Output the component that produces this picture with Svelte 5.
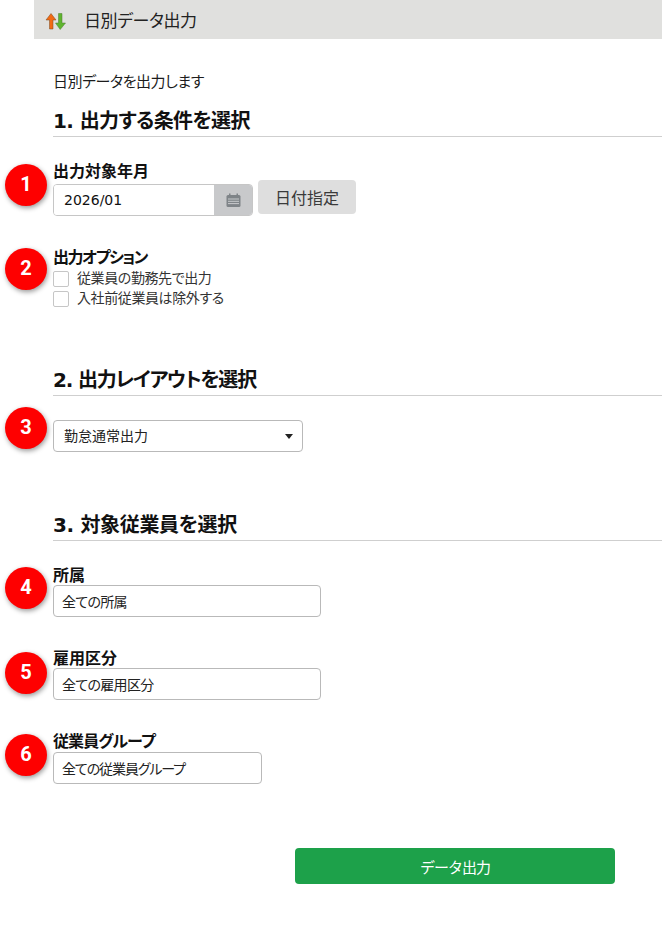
<script lang="ts">
  let month = $state('2026/01');
  let layout = $state('normal');
  let useWorkplace = $state(false);
  let excludeBeforeJoin = $state(false);

  const targets = [
    { no: 4, label: '所属', value: '全ての所属', size: 'wide' },
    { no: 5, label: '雇用区分', value: '全ての雇用区分', size: 'wide' },
    { no: 6, label: '従業員グループ', value: '全ての従業員グループ', size: 'narrow' }
  ];
</script>

<div class="page">
  <header class="head">
    <svg class="head-icon" width="22" height="20" viewBox="-1 -1.500 22 20" aria-hidden="true">
      <path d="M6 2 L11 8.500 H8 V17.500 H4.500 V8.500 H1 Z" fill="#f26a13" stroke="#7a4a20" stroke-width="0.5" />
      <path d="M13.500 2 H17 V11.500 H20.500 L15.200 18 L10.500 11.500 H13.500 Z" fill="#5fb52e" stroke="#4c7a30" stroke-width="0.5" />
    </svg>
    <h1>日別データ出力</h1>
  </header>

  <main class="content">
    <p class="intro">日別データを出力します</p>

    <h2 class="first">1. 出力する条件を選択</h2>

    <div class="field month-field">
      <span class="badge">1</span>
      <div class="label">出力対象年月</div>
      <div class="month-row">
        <div class="month-group">
          <input class="month-input" bind:value={month} />
          <span class="month-addon">
            <svg width="15" height="14" viewBox="0 0 15 14" aria-hidden="true">
              <rect x="0.500" y="2" width="14" height="12" rx="1.500" fill="#7f8488" />
              <rect x="3" y="0.500" width="1.500" height="3" fill="#7f8488" />
              <rect x="10.500" y="0.500" width="1.500" height="3" fill="#7f8488" />
              <path d="M2 6 H13 M2 8.300 H13 M2 10.600 H13" stroke="#c9cbcd" stroke-width="1" />
            </svg>
          </span>
        </div>
        <button class="date-btn" type="button">日付指定</button>
      </div>
    </div>

    <div class="field option-field">
      <span class="badge">2</span>
      <div class="label tight">出力オプション</div>
      <label class="check"><input type="checkbox" bind:checked={useWorkplace} />従業員の勤務先で出力</label>
      <label class="check"><input type="checkbox" bind:checked={excludeBeforeJoin} />入社前従業員は除外する</label>
    </div>

    <h2 class="second">2. 出力レイアウトを選択</h2>

    <div class="field layout-field">
      <span class="badge">3</span>
      <div class="select-wrap">
        <select bind:value={layout}>
          <option value="normal">勤怠通常出力</option>
        </select>
        <span class="caret"></span>
      </div>
    </div>

    <h2 class="third">3. 対象従業員を選択</h2>

    <div class="targets">
      {#each targets as t}
        <div class="field target">
          <span class="badge">{t.no}</span>
          <div class="label {t.size}-label">{t.label}</div>
          <input class="text-input {t.size}" value={t.value} readonly />
        </div>
      {/each}
    </div>

    <div class="actions">
      <button class="submit" type="button">データ出力</button>
    </div>
  </main>
</div>

<style>
  :global(body) {
    margin: 0;
    background: #fff;
  }

  .page {
    min-height: 928px;
    overflow: hidden;
    color: #1c1c1c;
    font-family: "DejaVu Sans", "Noto Sans CJK JP", sans-serif;
    font-size: 14px;
    font-feature-settings: "palt";
  }

  .head {
    display: flex;
    align-items: center;
    height: 39px;
    margin-left: 34px;
    padding-left: 10px;
    background: #e0e0de;
  }

  .head-icon {
    flex: none;
  }

  .head h1 {
    margin: 0 0 0 18px;
    font-size: 17px;
    font-weight: 400;
    letter-spacing: -0.4px;
    color: #222;
  }

  .content {
    padding: 33px 0 0 53px;
  }

  .intro {
    margin: 0;
    font-size: 15px;
    line-height: 20px;
    letter-spacing: -0.45px;
  }

  h2 {
    margin: 0;
    height: 31px;
    border-bottom: 1px solid #cfcfcf;
    font-size: 20px;
    line-height: 32px;
    font-weight: 700;
    color: #111;
  }

  h2.first {
    margin-top: 13px;
    letter-spacing: -0.6px;
  }

  h2.second {
    margin-top: 57px;
    letter-spacing: -1.2px;
  }

  h2.third {
    margin-top: 57px;
    letter-spacing: -0.35px;
  }

  .field {
    position: relative;
  }

  .badge {
    position: absolute;
    left: -48px;
    width: 42px;
    height: 42px;
    border-radius: 50%;
    background: #fe0000;
    box-shadow: 1px 2px 5px rgba(0, 0, 0, 0.4);
    color: #fff;
    font-family: Roboto, "Liberation Sans", sans-serif;
    font-size: 20px;
    font-weight: 700;
    line-height: 40px;
    text-align: center;
  }

  .label {
    height: 18px;
    font-size: 16px;
    line-height: 18px;
    font-weight: 700;
    color: #111;
  }

  .label.tight {
    letter-spacing: -1.5px;
  }

  .label.narrow-label {
    letter-spacing: -0.9px;
  }

  .month-field {
    margin-top: 26px;
  }

  .month-field .badge {
    top: 1px;
  }

  .month-row {
    display: flex;
    align-items: flex-start;
    margin-top: -1px;
    gap: 5px;
  }

  .month-group {
    display: flex;
    width: 200px;
    height: 32px;
    margin-top: 4px;
    box-sizing: border-box;
    border: 1px solid #c6c6c6;
    border-radius: 4px;
    overflow: hidden;
  }

  .month-input {
    flex: 1;
    min-width: 0;
    border: 0;
    outline: 0;
    padding: 0 0 0 10px;
    font: inherit;
    color: #111;
  }

  .month-addon {
    display: flex;
    align-items: center;
    justify-content: center;
    width: 38px;
    background: #c8c9cb;
  }

  .date-btn {
    width: 98px;
    height: 34px;
    padding: 0;
    border: 0;
    border-radius: 4px;
    background: #dedede;
    color: #3a3a3a;
    font-family: inherit;
    font-size: 16px;
  }

  .option-field {
    margin-top: 33px;
  }

  .option-field .badge {
    top: -1px;
  }

  .check {
    display: flex;
    align-items: flex-start;
    height: 16px;
    margin-top: 4px;
    font-size: 14px;
    line-height: 14px;
    letter-spacing: -0.4px;
    color: #333;
  }

  .check input {
    appearance: none;
    flex: none;
    width: 16px;
    height: 16px;
    margin: 0 8px 0 0;
    box-sizing: border-box;
    border: 1px solid #c6c6c6;
    border-radius: 2px;
    background: #fff;
  }

  .layout-field {
    margin-top: 24px;
  }

  .layout-field .badge {
    top: -13px;
  }

  .select-wrap {
    position: relative;
    width: 250px;
    height: 32px;
  }

  select {
    appearance: none;
    width: 100%;
    height: 100%;
    box-sizing: border-box;
    padding: 0 0 0 10px;
    border: 1px solid #b9b9b9;
    border-radius: 4px;
    background: #fff;
    color: #222;
    font: inherit;
    font-size: 14px;
    font-feature-settings: "palt";
  }

  .caret {
    position: absolute;
    top: 14px;
    right: 10px;
    width: 0;
    height: 0;
    border-left: 4px solid transparent;
    border-right: 4px solid transparent;
    border-top: 5px solid #222;
  }

  .targets {
    display: flex;
    flex-direction: column;
    gap: 33px;
    margin-top: 26px;
  }

  .target .badge {
    top: 0;
  }

  .target:nth-child(2) .badge {
    top: 2px;
  }

  .target:nth-child(3) .badge {
    top: 1px;
  }

  .text-input {
    display: block;
    height: 32px;
    box-sizing: border-box;
    padding: 0 0 0 8px;
    border: 1px solid #b9b9b9;
    border-radius: 4px;
    background: #fff;
    color: #222;
    font: inherit;
    font-size: 14px;
    font-feature-settings: "palt";
    letter-spacing: -0.7px;
    outline: 0;
  }

  .wide {
    width: 268px;
  }

  .narrow {
    width: 209px;
    margin-top: 1px;
    letter-spacing: -1.1px;
  }

  .actions {
    margin: 64px 0 0 242px;
  }

  .submit {
    width: 320px;
    height: 36px;
    padding: 0;
    border: 0;
    border-radius: 4px;
    background: #1da14a;
    color: #fff;
    font-family: inherit;
    font-size: 15px;
    letter-spacing: -1px;
  }
</style>
